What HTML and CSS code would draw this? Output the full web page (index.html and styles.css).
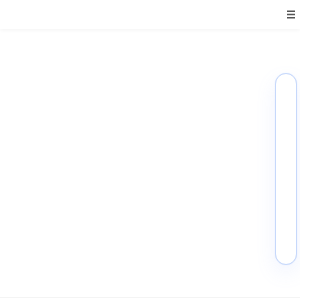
FILE: index.html
```html
<!DOCTYPE html>
<html lang="en">
<head>
<meta charset="utf-8">
<title>Page</title>
<link rel="stylesheet" href="styles.css">
</head>
<body>
<header class="topbar">
  <button class="menu-btn" aria-label="Menu">
    <svg width="8" height="9" viewBox="0 0 8 9"><rect x="0" y="0.5" width="8" height="1.5" fill="#555"/><rect x="0" y="3.75" width="8" height="1.5" fill="#555"/><rect x="0" y="7" width="8" height="1.5" fill="#555"/></svg>
  </button>
</header>
<main class="content">
  <aside class="side-pill"></aside>
</main>
<footer class="foot"></footer>
</body>
</html>
```
FILE: styles.css
```css
html, body {
  margin: 0;
  padding: 0;
  width: 300px;
  height: 300px;
  overflow: hidden;
  background: #ffffff;
  font-family: "Liberation Sans", Arial, sans-serif;
}
body {
  display: flex;
  flex-direction: column;
}
.topbar {
  height: 29px;
  flex: none;
  display: flex;
  justify-content: flex-end;
  align-items: flex-start;
  background: #fff;
  box-shadow: 0 1px 4px rgba(0,0,0,0.05);
  position: relative;
  z-index: 1;
}
.menu-btn {
  border: 0;
  background: none;
  padding: 0;
  margin: 10px 5px 0 0;
  width: 8px;
  height: 9px;
  display: block;
}
.menu-btn svg { display: block; }
.content {
  flex: 1;
  display: flex;
  justify-content: flex-end;
  align-items: flex-start;
  padding: 44px 3px 0 0;
  background: #fff;
}
.side-pill {
  width: 20px;
  height: 190px;
  border: 1px solid #c6d8fb;
  border-radius: 11px;
  background: #fff;
  box-shadow: 0 0 1px rgba(160,190,250,0.4), 0 8px 20px rgba(130,160,245,0.12);
}
.foot {
  height: 2px;
  flex: none;
  border-top: 1px solid #f4f4f4;
}
```
